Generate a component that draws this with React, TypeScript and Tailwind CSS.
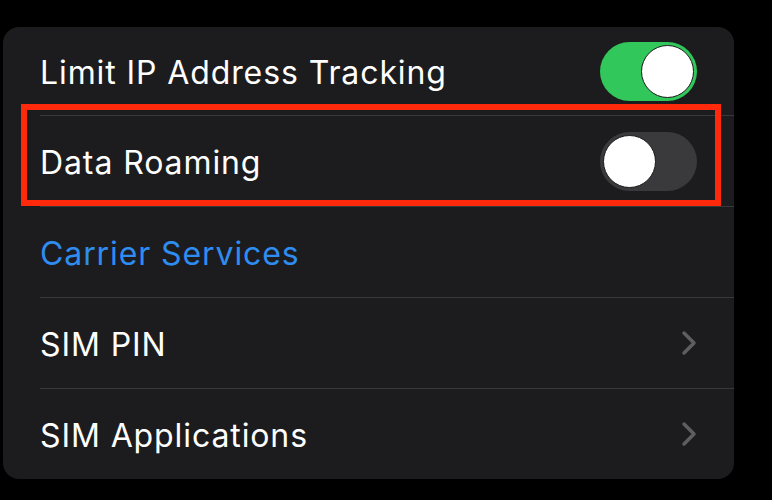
import React from "react"

function Toggle({ on }: { on: boolean }) {
  return (
    <div
      className={`relative w-[97px] h-[59px] rounded-full ${on ? "bg-[#32c75a]" : "bg-[#3a3a3d]"}`}
    >
      <div
        className={`absolute top-[3px] w-[53px] h-[53px] rounded-full bg-white border border-[#1a1a1a] ${on ? "right-[3px]" : "left-[3px]"}`}
      />
    </div>
  )
}

function Chevron() {
  return (
    <svg width="16" height="26" viewBox="0 0 16 26" fill="none">
      <path d="M3 3l10 10-10 10" stroke="#5d5d62" strokeWidth="3.5" strokeLinecap="round" strokeLinejoin="round" />
    </svg>
  )
}

export default function App() {
  const rows = [
    { label: "Limit IP Address Tracking", kind: "on", h: "h-[89px]" },
    { label: "Data Roaming", kind: "off", h: "h-[91px]" },
    { label: "Carrier Services", kind: "link", h: "h-[91px]" },
    { label: "SIM PIN", kind: "chevron", h: "h-[91px]" },
    { label: "SIM Applications", kind: "chevron", h: "h-[90px]" },
  ]

  return (
    <div className="w-[772px] h-[500px] bg-black pt-[27px] pl-[3px] font-['Inter',sans-serif]">
      <div className="relative w-[731px] rounded-[16px] bg-[#1c1c1e] overflow-hidden">
        {rows.map((row, i) => (
          <div key={i} className="pl-[37px]">
            <div
              className={`${row.h} flex items-center pr-[37px] ${i < rows.length - 1 ? "border-b border-[#38383b]" : ""}`}
            >
              <span
                className={`flex-1 pt-[3px] text-[32px] tracking-[0.9px] ${row.kind === "link" ? "text-[#2f8cf0]" : "text-white"}`}
              >
                {row.label}
              </span>
              {row.kind === "on" && <Toggle on />}
              {row.kind === "off" && <Toggle on={false} />}
              {row.kind === "chevron" && <Chevron />}
            </div>
          </div>
        ))}
        <div className="absolute left-[18px] top-[77px] w-[700px] h-[102px] border-[6px] border-[#ff2a0c]" />
      </div>
    </div>
  )
}
